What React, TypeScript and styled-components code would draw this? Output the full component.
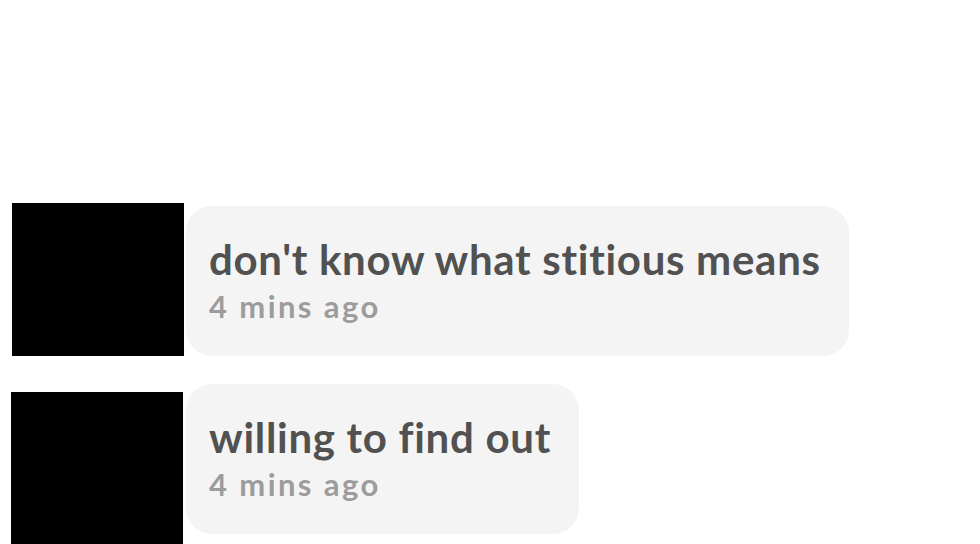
import React from "react";
import styled, { createGlobalStyle } from "styled-components";

const GlobalStyle = createGlobalStyle`
  html, body {
    margin: 0;
    padding: 0;
    background: #ffffff;
    overflow: hidden;
  }
  body {
    font-family: "Lato", "Open Sans", sans-serif;
    font-variant-ligatures: none;
  }
`;

const Page = styled.div`
  width: 980px;
  height: 544px;
  padding-top: 206px;
  box-sizing: border-box;
  display: flex;
  flex-direction: column;
  gap: 28px;
`;

const Row = styled.div`
  display: flex;
  align-items: flex-start;
  padding-left: 12px;
`;

const Avatar = styled.div<{ $top: number; $left: number }>`
  width: 172px;
  height: 153px;
  flex-shrink: 0;
  background: #000000;
  margin-top: ${(p) => p.$top}px;
  margin-left: ${(p) => p.$left}px;
  margin-right: ${(p) => 2 - p.$left}px;
`;

const Bubble = styled.div`
  height: 150px;
  box-sizing: border-box;
  padding: 30px 28px 0 23px;
  background: #f4f4f4;
  border-radius: 26px;
  display: flex;
  flex-direction: column;
  gap: 4px;
`;

const Message = styled.div`
  font-size: 42px;
  line-height: 46px;
  font-weight: 700;
  letter-spacing: 0.7px;
  color: #515151;
  white-space: nowrap;
`;

const Meta = styled.div`
  font-size: 31px;
  line-height: 40px;
  font-weight: 700;
  letter-spacing: 2.4px;
  color: #9c9c9c;
  white-space: nowrap;
`;

const comments = [
  { text: "don't know what stitious means", time: "4 mins ago", top: -3, left: 0 },
  { text: "willing to find out", time: "4 mins ago", top: 8, left: -1 },
];

export default function App() {
  return (
    <>
      <GlobalStyle />
      <Page>
        {comments.map((c) => (
          <Row key={c.text}>
            <Avatar $top={c.top} $left={c.left} />
            <Bubble>
              <Message>{c.text}</Message>
              <Meta>{c.time}</Meta>
            </Bubble>
          </Row>
        ))}
      </Page>
    </>
  );
}
